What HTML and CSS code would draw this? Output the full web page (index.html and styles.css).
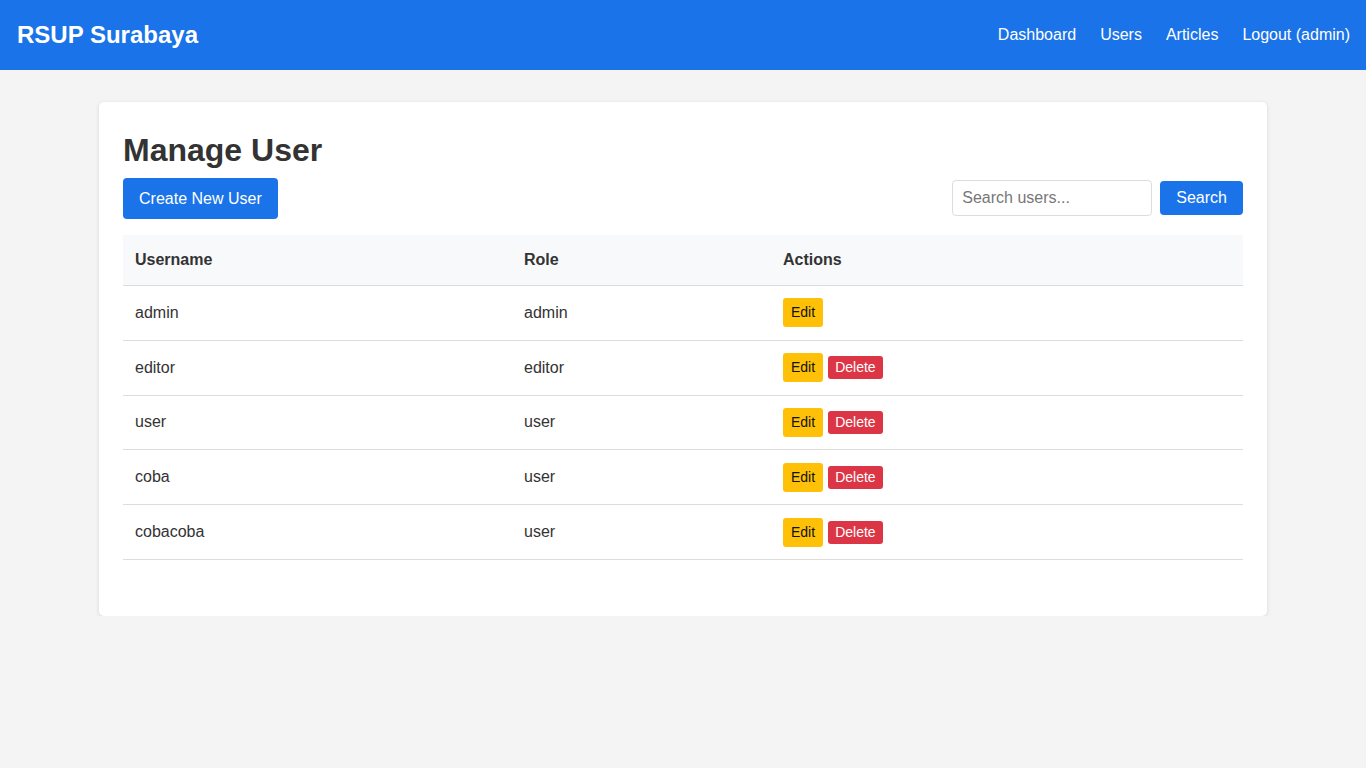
FILE: index.html
```html
<!DOCTYPE html>
<html lang="id">
<head>
<meta charset="utf-8">
<title>Manage User - RSUP Surabaya</title>
<link rel="stylesheet" href="styles.css">
</head>
<body>
<header class="topbar">
  <div class="brand">RSUP Surabaya</div>
  <nav class="nav">
    <a href="#">Dashboard</a>
    <a href="#">Users</a>
    <a href="#">Articles</a>
    <a href="#">Logout (admin)</a>
  </nav>
</header>
<main class="card">
  <h1 class="title">Manage User</h1>
  <div class="toolbar">
    <a href="#" class="btn btn-primary">Create New User</a>
    <form class="search">
      <input type="text" class="search-input" placeholder="Search users...">
      <button type="button" class="btn-search">Search</button>
    </form>
  </div>
  <table class="users">
    <colgroup>
      <col class="col-user">
      <col class="col-role">
      <col>
    </colgroup>
    <thead>
      <tr><th>Username</th><th>Role</th><th>Actions</th></tr>
    </thead>
    <tbody>
      <tr><td>admin</td><td>admin</td><td><div class="actions"><a href="#" class="btn-edit">Edit</a></div></td></tr>
      <tr><td>editor</td><td>editor</td><td><div class="actions"><a href="#" class="btn-edit">Edit</a><button class="btn-delete">Delete</button></div></td></tr>
      <tr><td>user</td><td>user</td><td><div class="actions"><a href="#" class="btn-edit">Edit</a><button class="btn-delete">Delete</button></div></td></tr>
      <tr><td>coba</td><td>user</td><td><div class="actions"><a href="#" class="btn-edit">Edit</a><button class="btn-delete">Delete</button></div></td></tr>
      <tr><td>cobacoba</td><td>user</td><td><div class="actions"><a href="#" class="btn-edit">Edit</a><button class="btn-delete">Delete</button></div></td></tr>
    </tbody>
  </table>
</main>
</body>
</html>
```
FILE: styles.css
```css
* { box-sizing: border-box; }
html, body { margin: 0; padding: 0; }
body {
  font-family: "Liberation Sans", Arial, sans-serif;
  font-size: 16px;
  color: #333;
  background: #f4f4f4;
}
a { text-decoration: none; }

.topbar {
  height: 70px;
  background: #1a73e8;
  display: flex;
  align-items: center;
  justify-content: space-between;
  padding: 0 16px 0 17px;
}
.brand {
  color: #fff;
  font-size: 24px;
  font-weight: bold;
}
.nav {
  display: flex;
  gap: 24px;
}
.nav a {
  color: #fff;
  font-size: 16px;
}

.card {
  width: 1168px;
  margin: 32px auto 0;
  background: #fff;
  border-radius: 5px;
  box-shadow: 0 1px 4px rgba(0, 0, 0, 0.12);
  padding: 30px 24px 56px;
}
.title {
  margin: 0 0 9px;
  font-size: 32px;
  font-weight: bold;
  color: #333;
  line-height: 37px;
}
.toolbar {
  display: flex;
  justify-content: space-between;
  align-items: center;
  margin-bottom: 16px;
}
.btn {
  display: inline-block;
  border-radius: 4px;
  font-size: 16px;
}
.btn-primary {
  background: #1a73e8;
  color: #fff;
  padding: 11px 16px;
  line-height: 19px;
}
.search {
  display: flex;
  align-items: center;
  gap: 8px;
  margin: 0 0 1px;
}
.search-input {
  width: 200px;
  height: 36px;
  border: 1px solid #ddd;
  border-radius: 4px;
  padding: 0 9px;
  font-family: "Liberation Sans", Arial, sans-serif;
  font-size: 16px;
  color: #333;
}
.search-input::placeholder { color: #777; }
.btn-search {
  background: #1a73e8;
  color: #fff;
  border: none;
  border-radius: 4px;
  height: 34px;
  padding: 0 16px;
  font-family: "Liberation Sans", Arial, sans-serif;
  font-size: 16px;
}

.users {
  width: 100%;
  border-collapse: collapse;
  table-layout: fixed;
}
.col-user { width: 389px; }
.col-role { width: 259px; }
.users th {
  background: #f8f9fa;
  text-align: left;
  font-weight: bold;
  padding: 15px 12px;
  line-height: 20px;
  border-bottom: 1px solid #ddd;
}
.users td {
  padding: 12px;
  height: 54.8px;
  border-bottom: 1px solid #ddd;
  vertical-align: middle;
}
.actions {
  display: flex;
  align-items: center;
  gap: 5px;
}
.btn-edit {
  display: inline-block;
  background: #ffc107;
  color: #111;
  font-size: 14px;
  line-height: 17px;
  padding: 6px 8px;
  border-radius: 3px;
}
.btn-delete {
  background: #dc3545;
  color: #fff;
  border: none;
  font-family: "Liberation Sans", Arial, sans-serif;
  font-size: 14px;
  line-height: 17px;
  padding: 3px 7px;
  border-radius: 3px;
}
```
